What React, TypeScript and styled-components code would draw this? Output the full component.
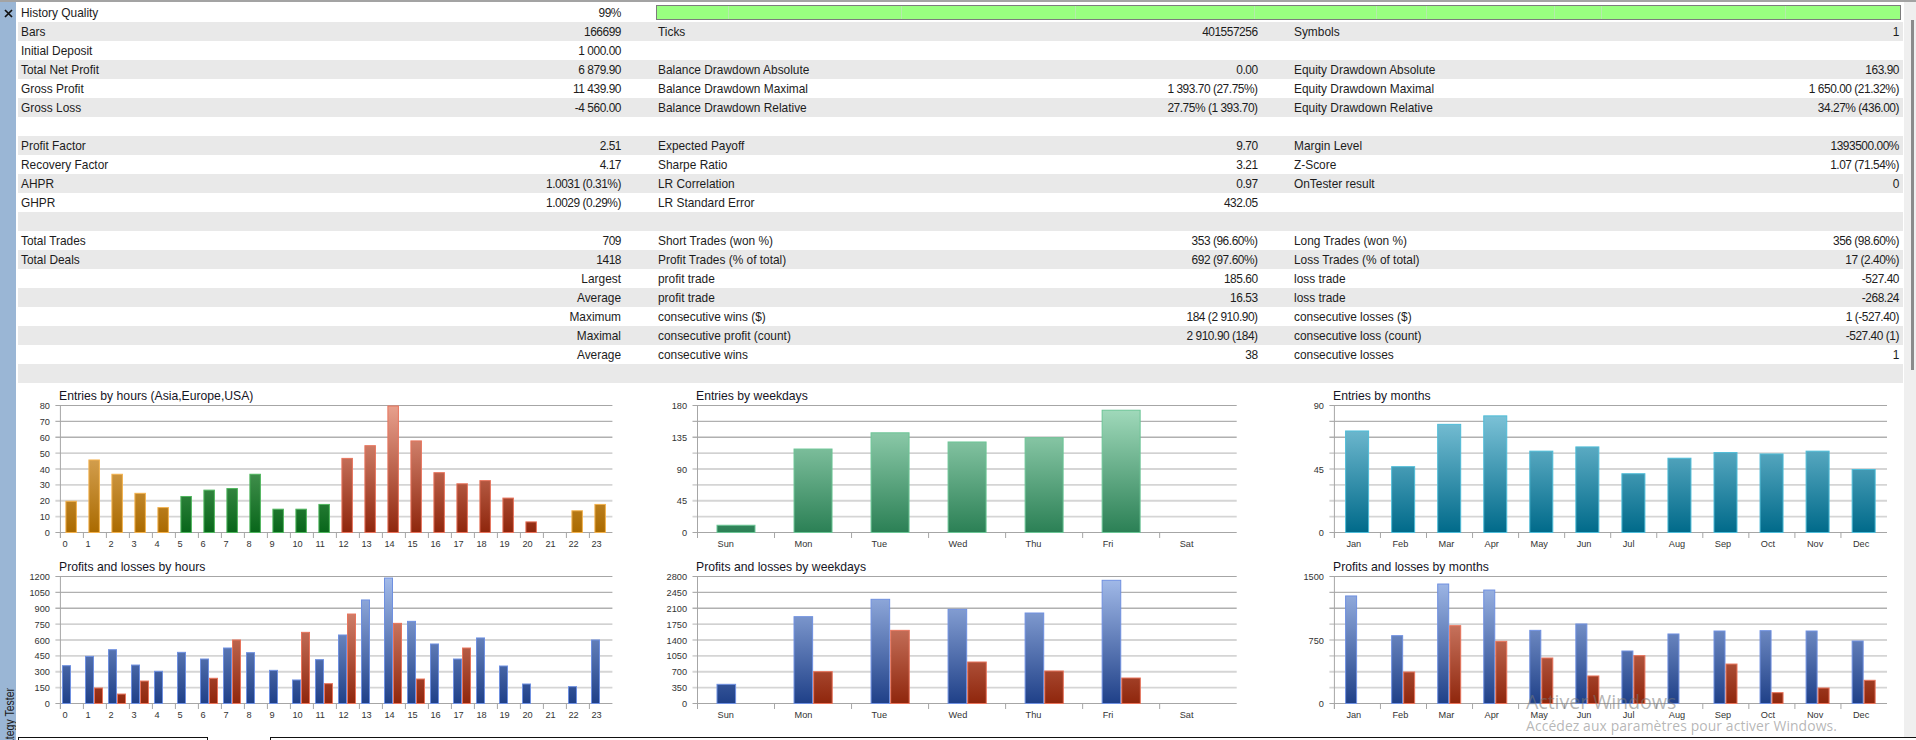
import React from "react";
import styled, { createGlobalStyle } from "styled-components";

const Global = createGlobalStyle`
  html, body { margin: 0; padding: 0; background: #fff; overflow: hidden; }
  body { font-family: "Liberation Sans", Arial, sans-serif; }
`;

const Page = styled.div`
  position: relative;
  width: 1916px;
  height: 740px;
  overflow: hidden;
  background: #fff;
  display: grid;
  grid-template-columns: 16px 1fr 12px;
  border-top: 2px solid #a3a3a3;
  box-sizing: border-box;
`;

const Rail = styled.aside`
  background: #9ab6d5;
  display: flex;
  flex-direction: column;
  justify-content: space-between;
  align-items: center;
  overflow: hidden;
`;

const Close = styled.svg`
  width: 9px;
  height: 9px;
  margin-top: 7px;
`;

const RailLabel = styled.span`
  writing-mode: vertical-rl;
  transform: rotate(180deg) scaleX(1.18);
  font-size: 10.5px;
  color: #1a1a1a;
  white-space: nowrap;
  margin-bottom: -13px;
  margin-left: 2px;
`;

const Main = styled.main`
  padding: 1px 0 0 2px;
  display: flex;
  flex-direction: column;
  min-width: 0;
`;

const Table = styled.section`
  width: 1885px;
`;

const Row = styled.div<{ $shade: boolean }>`
  display: grid;
  grid-template-columns: 603px 34px 602.6px 33.4px 608px 4px;
  height: 19px;
  line-height: 19px;
  font-size: 11.9px;
  color: #1c1c1c;
  background: ${(p) => (p.$shade ? "#e9e9e9" : "#fff")};
`;

const Pair = styled.div<{ $col: number }>`
  grid-column: ${(p) => p.$col};
  display: flex;
  justify-content: space-between;
  padding: 1px 0 0 3px;
  height: 18px;
  white-space: nowrap;
`;

const Value = styled.span<{ $num: boolean }>`
  letter-spacing: ${(p) => (p.$num ? "-0.45px" : "0")};
`;

const Meter = styled.div`
  grid-column: 3 / 7;
  margin: 2px 0 0 1px;
  width: 1245px;
  height: 15px;
  box-sizing: border-box;
  border: 1.5px solid #7c7c7c;
  background: #99ff80;
  display: flex;
`;

const MeterPart = styled.span<{ $w: number }>`
  width: ${(p) => p.$w}px;
  border-right: 1px solid #b4ecaa;
`;

const Charts = styled.section`
  margin-top: 5px;
  display: grid;
  grid-template-columns: 642px 636px 608px;
  grid-auto-rows: 171px;
`;

const ChartBox = styled.figure<{ $title: number }>`
  margin: 0;
  display: flex;
  flex-direction: column;
  figcaption {
    height: 16px;
    line-height: 16px;
    padding-left: ${(p) => p.$title}px;
    font-size: 12.2px;
    color: #15151f;
    white-space: nowrap;
  }
  svg { display: block; overflow: visible; }
`;

const Tabs = styled.div`
  margin-top: 7px;
  display: flex;
  height: 8px;
`;

const Tab = styled.div<{ $w?: number; $gap?: number }>`
  box-sizing: border-box;
  width: ${(p) => (p.$w ? `${p.$w}px` : "auto")};
  flex: ${(p) => (p.$w ? "none" : 1)};
  margin-left: ${(p) => p.$gap ?? 0}px;
  margin-right: ${(p) => (p.$w ? 0 : -12)}px;
  border-top: 1px solid #111;
  border-left: 1px solid #111;
  border-right: ${(p) => (p.$w ? "1px solid #111" : "none")};
  background: #fff;
`;

const Track = styled.aside`
  background: #efefef;
  position: relative;
  height: 735px;
`;

const Thumb = styled.div`
  position: absolute;
  left: 7px;
  top: 18px;
  width: 2.5px;
  height: 350px;
  background: #8b8b8b;
`;

const Watermark = styled.div`
  position: absolute;
  left: 1526px;
  top: 687px;
  color: rgba(120, 120, 120, 0.55);
  font-family: "Open Sans", sans-serif;
  pointer-events: none;
  white-space: nowrap;
  strong {
    display: block;
    font-weight: 400;
    font-size: 19.7px;
    line-height: 26px;
    letter-spacing: -0.1px;
  }
  span {
    display: block;
    font-size: 13.9px;
    line-height: 19px;
    margin-top: 1px;
    letter-spacing: 0.1px;
  }
`;

type R = [string, string, string?, string?, string?, string?];
const rows: (R | null)[] = [
  ["History Quality", "99%"],
  ["Bars", "166699", "Ticks", "401557256", "Symbols", "1"],
  ["Initial Deposit", "1 000.00"],
  ["Total Net Profit", "6 879.90", "Balance Drawdown Absolute", "0.00", "Equity Drawdown Absolute", "163.90"],
  ["Gross Profit", "11 439.90", "Balance Drawdown Maximal", "1 393.70 (27.75%)", "Equity Drawdown Maximal", "1 650.00 (21.32%)"],
  ["Gross Loss", "-4 560.00", "Balance Drawdown Relative", "27.75% (1 393.70)", "Equity Drawdown Relative", "34.27% (436.00)"],
  null,
  ["Profit Factor", "2.51", "Expected Payoff", "9.70", "Margin Level", "1393500.00%"],
  ["Recovery Factor", "4.17", "Sharpe Ratio", "3.21", "Z-Score", "1.07 (71.54%)"],
  ["AHPR", "1.0031 (0.31%)", "LR Correlation", "0.97", "OnTester result", "0"],
  ["GHPR", "1.0029 (0.29%)", "LR Standard Error", "432.05"],
  null,
  ["Total Trades", "709", "Short Trades (won %)", "353 (96.60%)", "Long Trades (won %)", "356 (98.60%)"],
  ["Total Deals", "1418", "Profit Trades (% of total)", "692 (97.60%)", "Loss Trades (% of total)", "17 (2.40%)"],
  ["", "Largest", "profit trade", "185.60", "loss trade", "-527.40"],
  ["", "Average", "profit trade", "16.53", "loss trade", "-268.24"],
  ["", "Maximum", "consecutive wins ($)", "184 (2 910.90)", "consecutive losses ($)", "1 (-527.40)"],
  ["", "Maximal", "consecutive profit (count)", "2 910.90 (184)", "consecutive loss (count)", "-527.40 (1)"],
  ["", "Average", "consecutive wins", "38", "consecutive losses", "1"],
  null,
];

const isNum = (s?: string) => !!s && /^[-\d]/.test(s);

type Ramp = { id: string; top: string; bottom: string; edge: string };
const RAMPS: Record<string, Ramp> = {
  orange: { id: "g-orange", top: "#f0c486", bottom: "#aa6a00", edge: "#f3b24e" },
  green: { id: "g-green", top: "#80bd84", bottom: "#08661a", edge: "#4fb65e" },
  red: { id: "g-red", top: "#e8a18e", bottom: "#8f260c", edge: "#e8745c" },
  mint: { id: "g-mint", top: "#a4dcbe", bottom: "#2b8055", edge: "#6cc596" },
  teal: { id: "g-teal", top: "#86c9dd", bottom: "#006a8a", edge: "#4fbcd8" },
  blue: { id: "g-blue", top: "#a4bcea", bottom: "#1f4088", edge: "#6f90e0" },
};

const TOP = 1.5;
const H = 127;
const BASE = TOP + H;

const gridColor = (i: number) => {
  if (i === 0 || i === 8) return "#a6a6a6";
  if (i < 3) return "#b0b0b0";
  if (i === 3) return "#c2c2c2";
  return "#d5d5d5";
};

type Bar = { col: number; value: number; ramp: string; offset: number; width: number };
type Spec = {
  title: string;
  titleX: number;
  left: number;
  width: number;
  max: number;
  labelEvery: number;
  cats: string[];
  labelX: number;
  bars: Bar[];
};

const Chart: React.FC<{ spec: Spec }> = ({ spec }) => {
  const { left, width, max, labelEvery, cats, labelX, bars } = spec;
  const step = width / cats.length;
  const lines = Array.from({ length: 9 }, (_, i) => i);
  return (
    <ChartBox $title={spec.titleX}>
      <figcaption>{spec.title}</figcaption>
      <svg width={left + width + 12} height={155}>
        <defs>
          {Object.values(RAMPS).map((r) => (
            <linearGradient key={r.id} id={`${r.id}-${spec.title.length}`} gradientUnits="userSpaceOnUse" x1="0" y1={TOP} x2="0" y2={BASE}>
              <stop offset="0" stopColor={r.top} />
              <stop offset="1" stopColor={r.bottom} />
            </linearGradient>
          ))}
        </defs>
        {lines.map((i) => {
          const y = TOP + (H * i) / 8;
          return (
            <g key={i}>
              <line
                x1={left - 5}
                x2={left + width}
                y1={y}
                y2={y}
                stroke={gridColor(i)}
                strokeWidth={i === 0 || i === 8 ? 1.2 : i < 4 ? 1.4 : 1.9}
              />
              {i % labelEvery === 0 && (
                <text x={left - 10.5} y={y + 3.5} fontSize="9.2" textAnchor="end" fill="#333" fontFamily="Liberation Sans">
                  {Math.round((max * (8 - i)) / 8)}
                </text>
              )}
            </g>
          );
        })}
        <line x1={left} x2={left} y1={TOP} y2={BASE + 5.5} stroke="#a6a6a6" />
        {cats.map((c, i) => (
          <g key={c}>
            <line x1={left + step * i} x2={left + step * i} y1={BASE} y2={BASE + 5.5} stroke="#a6a6a6" />
            <text x={left + step * i + labelX} y={BASE + 14.5} fontSize="9.2" fill="#333" fontFamily="Liberation Sans">
              {c}
            </text>
          </g>
        ))}
        {bars
          .filter((b) => b.value > 0)
          .map((b, i) => {
            const r = RAMPS[b.ramp];
            const h = (b.value / max) * H;
            return (
              <rect
                key={i}
                x={left + step * b.col + b.offset + 0.5}
                y={BASE - h + 0.5}
                width={b.width - 1}
                height={h - 0.5}
                fill={`url(#${r.id}-${spec.title.length})`}
                stroke={r.edge}
                strokeWidth={1}
              />
            );
          })}
      </svg>
    </ChartBox>
  );
};

const HOURS = Array.from({ length: 24 }, (_, i) => String(i));
const DAYS = ["Sun", "Mon", "Tue", "Wed", "Thu", "Fri", "Sat"];
const MONTHS = ["Jan", "Feb", "Mar", "Apr", "May", "Jun", "Jul", "Aug", "Sep", "Oct", "Nov", "Dec"];

const hourRamp = (i: number) => (i <= 4 || i >= 21 ? "orange" : i <= 11 ? "green" : "red");

const single = (vals: number[], ramp: (i: number) => string, offset: number, width: number): Bar[] =>
  vals.map((value, col) => ({ col, value, ramp: ramp(col), offset, width }));

const pair = (blue: number[], red: number[], offset: number, width: number): Bar[] => [
  ...blue.map((value, col) => ({ col, value, ramp: "blue", offset, width })),
  ...red.map((value, col) => ({ col, value, ramp: "red", offset: offset + width, width })),
];

const L1 = 42.4;
const L2 = 37.5;
const L3 = 38.4;

const specs: Spec[] = [
  {
    title: "Entries by hours (Asia,Europe,USA)", titleX: 41, left: L1, width: 552, max: 80, labelEvery: 1, cats: HOURS, labelX: 2,
    bars: single([20, 46, 37, 25, 16, 23, 27, 28, 37, 15, 15, 18, 47, 55, 80, 58, 38, 31, 33, 22, 7, 0, 14, 18], hourRamp, 5, 11.5),
  },
  {
    title: "Entries by weekdays", titleX: 36, left: L2, width: 539.2, max: 180, labelEvery: 2, cats: DAYS, labelX: 20,
    bars: single([11, 119, 142, 129, 135, 174, 0], () => "mint", 19, 39),
  },
  {
    title: "Entries by months", titleX: 37, left: L3, width: 552.6, max: 90, labelEvery: 4, cats: MONTHS, labelX: 12,
    bars: single([72.3, 47, 77, 83, 58, 61, 42, 53, 57, 56, 58, 45], () => "teal", 10.7, 24),
  },
  {
    title: "Profits and losses by hours", titleX: 41, left: L1, width: 552, max: 1200, labelEvery: 1, cats: HOURS, labelX: 2,
    bars: pair(
      [362, 450, 513, 368, 309, 488, 425, 529, 485, 318, 227, 419, 652, 983, 1190, 781, 567, 425, 624, 359, 189, 0, 164, 605],
      [0, 151, 94, 217, 0, 0, 243, 605, 0, 0, 677, 192, 850, 0, 762, 236, 0, 529, 0, 0, 0, 0, 0, 0],
      1.6, 9
    ),
  },
  {
    title: "Profits and losses by weekdays", titleX: 36, left: L2, width: 539.2, max: 2800, labelEvery: 1, cats: DAYS, labelX: 20,
    bars: pair([434, 1925, 2308, 2087, 2006, 2727, 0], [0, 713, 1624, 926, 728, 573, 0], 19, 19.6),
  },
  {
    title: "Profits and losses by months", titleX: 37, left: L3, width: 552.6, max: 1500, labelEvery: 4, cats: MONTHS, labelX: 12,
    bars: pair(
      [1276, 807, 1417, 1346, 870, 945, 626, 827, 862, 866, 862, 744],
      [0, 378, 925, 740, 543, 331, 571, 0, 472, 134, 189, 280],
      10.7, 12
    ),
  },
];

const App: React.FC = () => (
  <Page>
    <Global />
    <Rail>
      <Close viewBox="0 0 9 9">
        <path d="M1 1 L8 8 M8 1 L1 8" stroke="#111" strokeWidth="1.7" />
      </Close>
      <RailLabel>Strategy Tester</RailLabel>
    </Rail>
    <Main>
      <Table>
        {rows.map((r, i) => {
          const shade = i % 2 === 1;
          if (!r) return <Row key={i} $shade={shade} />;
          return (
            <Row key={i} $shade={shade}>
              <Pair $col={1}>
                <span>{r[0]}</span>
                <Value $num={isNum(r[1])}>{r[1]}</Value>
              </Pair>
              {i === 0 ? (
                <Meter>
                  {[71, 172, 173, 178, 121, 49, 127, 46, 183].map((w, k) => (
                    <MeterPart key={k} $w={w} />
                  ))}
                </Meter>
              ) : (
                <>
                  {r[2] && (
                    <Pair $col={3}>
                      <span>{r[2]}</span>
                      <Value $num={isNum(r[3])}>{r[3]}</Value>
                    </Pair>
                  )}
                  {r[4] && (
                    <Pair $col={5}>
                      <span>{r[4]}</span>
                      <Value $num={isNum(r[5])}>{r[5]}</Value>
                    </Pair>
                  )}
                </>
              )}
            </Row>
          );
        })}
      </Table>
      <Charts>
        {specs.map((s) => (
          <Chart key={s.title} spec={s} />
        ))}
      </Charts>
      <Tabs>
        <Tab $w={190} />
        <Tab $gap={62} />
      </Tabs>
    </Main>
    <Track>
      <Thumb />
    </Track>
    <Watermark>
      <strong>Activer Windows</strong>
      <span>Accédez aux paramètres pour activer Windows.</span>
    </Watermark>
  </Page>
);

export default App;
